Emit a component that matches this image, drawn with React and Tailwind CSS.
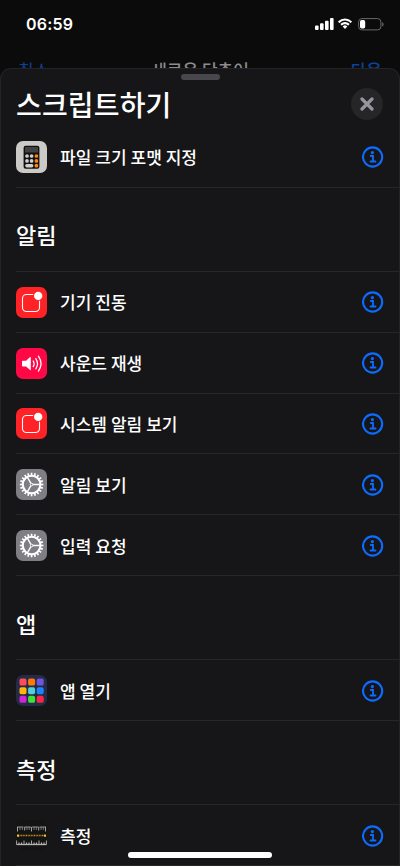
const LAUNCHER_COLORS = [
  '#ff4b5c', '#ff7a0a', '#6d55e0',
  '#ffb70f', '#4fd3d9', '#1a84ff',
  '#cf25d6', '#3fe335', '#ff2546',
];

const GEAR_TEETH = Array.from({ length: 20 }, (_, i) => i * 18);

function CalculatorIcon() {
  return (
    <svg viewBox="0 0 31 32" className="h-8 w-[31px]">
      <rect width="31" height="32" rx="7" fill="#cbcac6" />
      <rect x="7.6" y="4.7" width="15.8" height="23" rx="2" fill="#111112" />
      <rect x="9" y="6" width="13" height="5.6" rx="0.6" fill="#414143" />
      {[15, 19.9].map((y) => (
        <g key={y}>
          <circle cx="11" cy={y} r="1.85" fill="#d0cfd0" />
          <circle cx="15.6" cy={y} r="1.85" fill="#d0cfd0" />
          <circle cx="20.4" cy={y} r="1.85" fill="#ff8412" />
        </g>
      ))}
      <rect x="9.2" y="22.9" width="8.2" height="3.6" rx="1.7" fill="#d0cfd0" />
      <circle cx="20.4" cy="24.7" r="1.85" fill="#ff8412" />
    </svg>
  );
}

function NotificationIcon() {
  return (
    <svg viewBox="0 0 31 31" className="size-[31px]">
      <rect width="31" height="31" rx="7" fill="#ff2226" />
      <path
        d="M17.2 7.5h-6.7a4 4 0 0 0-4 4v9a4 4 0 0 0 4 4h9a4 4 0 0 0 4-4v-6.8"
        fill="none"
        stroke="#fff"
        strokeWidth="1.1"
      />
      <circle cx="22.2" cy="8.9" r="4.2" fill="#fff" />
    </svg>
  );
}

function SoundIcon() {
  return (
    <svg viewBox="0 0 31 31" className="size-[31px]">
      <rect width="31" height="31" rx="7" fill="#ff0845" />
      <path
        d="M6.9 12.7h3.2l4-3.6q.7-.5.7.4v12.2q0 .9-.7.4l-4-3.6H6.9q-.9 0-.9-.9v-4q0-.9.9-.9Z"
        fill="#fff"
      />
      <g fill="none" stroke="#fff" strokeWidth="1.25" strokeLinecap="round">
        <path d="M17.200 13q1.900 2.800 0 5.600" />
        <path d="M19.800 10.600q3.400 5.100 0 10.200" />
        <path d="M22.400 8.200q5.200 7.500 0 15" />
      </g>
    </svg>
  );
}

function GearIcon() {
  return (
    <svg viewBox="0 0 31 31" className="size-[31px]">
      <rect width="31" height="31" rx="7" fill="#7e7e83" />
      <g transform="translate(15.6 15.5)" stroke="#fff" fill="none">
        {GEAR_TEETH.map((angle) => (
          <path key={angle} d="M0-9.2V-11.8" strokeWidth="1.7" transform={`rotate(${angle})`} />
        ))}
        <circle r="8.8" strokeWidth="2.1" />
        <path d="M1.2 0H8.6M-.7-1.2-4.4-7.6M-.7 1.2-4.4 7.6" strokeWidth="1.4" />
        <circle r="1.3" strokeWidth="1" />
      </g>
    </svg>
  );
}

function LauncherIcon() {
  return (
    <svg viewBox="0 0 31 31" className="size-[31px]">
      <rect width="31" height="31" rx="7" fill="#262b45" />
      {LAUNCHER_COLORS.map((color, i) => (
        <rect
          key={color}
          x={3.5 + (i % 3) * 8.6}
          y={3.6 + Math.floor(i / 3) * 8.6}
          width="7"
          height="7"
          rx="1.9"
          fill={color}
        />
      ))}
    </svg>
  );
}

function MeasureIcon() {
  return (
    <svg viewBox="0 0 31 31" className="size-[31px]">
      <rect width="31" height="31" rx="7" fill="#141414" />
      <g stroke="#b4b4b4" strokeWidth="0.9" fill="none">
        <path d="M1 7H30" strokeWidth="0.8" strokeDasharray="6.5 1" />
        <path d="M1.5 7v4.500M8.700 7v3.500M15.500 7v4.500M22.700 7v3.500M29.500 7v4.500" />
        <path d="M4 7v3M6.300 7v3M11 7v3M13.200 7v3M18 7v3M20.300 7v3M25 7v3M27.300 7v3" strokeWidth="0.6" />
        <path d="M.5 24.500H30.500" strokeWidth="1.300" />
        <path d="M.6 20.500v4M8 20.500v4M15.500 20.500v4M23 20.500v4M30.400 20.500v4" />
        <path d="M3 22.500v2M5.500 22.500v2M10.500 22.500v2M13 22.500v2M18 22.500v2M20.500 22.500v2M25.500 22.500v2M28 22.500v2" strokeWidth="1.200" />
      </g>
      <path d="M2 15.600H29" stroke="#c39420" strokeWidth="1.500" strokeDasharray="1 .6" />
      <rect x="1" y="14.500" width="2" height="2.200" rx=".5" fill="#ffc21c" />
      <rect x="28" y="14.500" width="2" height="2.200" rx=".5" fill="#ffc21c" />
    </svg>
  );
}

function InfoIcon() {
  return (
    <svg viewBox="0 0 22 22" className="size-[22px]" fill="none" stroke="#0d6bff">
      <circle cx="10.6" cy="11" r="9.6" strokeWidth="2.1" />
      <circle cx="10.4" cy="6.6" r="1.6" fill="#0d6bff" stroke="none" />
      <path d="M8.800 10h2.200v5.500M8.500 15.500h5" strokeWidth="1.800" strokeLinecap="round" />
    </svg>
  );
}

const SECTIONS = [
  {
    items: [{ name: '파일 크기 포맷 지정', Icon: CalculatorIcon }],
  },
  {
    title: '알림',
    items: [
      { name: '기기 진동', Icon: NotificationIcon },
      { name: '사운드 재생', Icon: SoundIcon },
      { name: '시스템 알림 보기', Icon: NotificationIcon },
      { name: '알림 보기', Icon: GearIcon },
      { name: '입력 요청', Icon: GearIcon },
    ],
  },
  {
    title: '앱',
    items: [{ name: '앱 열기', Icon: LauncherIcon }],
  },
  {
    title: '측정',
    items: [{ name: '측정', Icon: MeasureIcon }],
  },
];

function StatusBar() {
  return (
    <div className="flex h-12 items-center justify-between pr-4 pl-[26px]">
      <span className="font-['Inter'] text-[16px] font-semibold tracking-[0.2px] text-white">06:59</span>
      <div className="flex items-center">
        <svg viewBox="0 0 19 12" className="h-3 w-[19px]" fill="#fff">
          <rect x="0" y="7.500" width="3.600" height="4.500" rx="1" />
          <rect x="5" y="5.200" width="3.600" height="6.800" rx="1" />
          <rect x="10" y="2.700" width="3.600" height="9.300" rx="1" />
          <rect x="15" y="0" width="3.600" height="12" rx="1" />
        </svg>
        <svg viewBox="0 0 17 12" className="ml-[3px] h-3 w-4" fill="#fff" preserveAspectRatio="none">
          <path d="M8.500 2.600c2.200 0 4.200.9 5.700 2.300.1.1.3.1.4 0l1.100-1.100c.2-.1.2-.4 0-.5a10.400 10.400 0 0 0-14.400 0c-.2.1-.2.4 0 .5l1.100 1.100c.1.1.3.1.4 0A8.300 8.300 0 0 1 8.500 2.600Z" />
          <path d="M8.500 6.200c1.200 0 2.300.4 3.200 1.200.1.1.3.1.4 0l1.100-1.100c.2-.2.2-.4 0-.5a6.900 6.900 0 0 0-9.400 0c-.2.1-.2.3 0 .5l1.100 1.100c.1.1.3.1.4 0 .9-.8 2-1.200 3.200-1.200Z" />
          <path d="M10.700 8.700c.2-.1.2-.4 0-.5a3.500 3.500 0 0 0-4.400 0c-.2.1-.2.4 0 .5l1.900 2c.2.1.4.1.6 0Z" />
        </svg>
        <svg viewBox="0 0 26 13" className="ml-[5px] h-[13px] w-[26px]">
          <rect x=".6" y=".6" width="22.300" height="11.300" rx="3.300" fill="none" stroke="#68686a" strokeWidth="1" />
          <rect x="2" y="2" width="5.200" height="8.500" rx="1.700" fill="#fff" />
          <path d="M24.200 4.300v4.200c.8-.4 1.400-1.200 1.400-2.100s-.6-1.700-1.400-2.100Z" fill="#68686a" />
        </svg>
      </div>
    </div>
  );
}

function ActionRow({ name, Icon }) {
  return (
    <div className="ml-4 flex h-[60.8px] items-center border-b border-[#272729] pt-px pr-4">
      <Icon />
      <span className="ml-[13px] flex-1 text-[17px] leading-6 font-medium tracking-[0.04px]">{name}</span>
      <InfoIcon />
    </div>
  );
}

export default function App() {
  return (
    <div className="relative h-[866px] w-[400px] overflow-hidden bg-[#0b0b0b] font-['Noto_Sans_CJK_KR',sans-serif] text-white">
      <StatusBar />
      <div className="flex h-5 justify-between overflow-hidden px-[18px] pt-[10px] text-[17px] leading-6">
        <span className="text-[#0b429a]">취소</span>
        <span className="font-medium text-[#8c8c8d]">새로운 단축어</span>
        <span className="font-medium text-[#0b429a]">다음</span>
      </div>

      {/* Action picker sheet */}
      <div className="h-[798px] overflow-hidden rounded-t-[11px] border-x border-t border-[#242426] bg-[#161618]">
        <div className="mx-auto mt-[5px] h-[6px] w-[39px] rounded-full bg-[#48484c]" />
        <div className="flex h-[47px] items-center justify-between pr-4 pl-[15px]">
          <h1 className="text-[28px] leading-[40px] font-medium tracking-[0.15px]">스크립트하기</h1>
          <button className="flex size-8 items-center justify-center rounded-full bg-[#262629]">
            <svg viewBox="0 0 14 14" className="size-[14px]" stroke="#95959e" strokeWidth="3.200" strokeLinecap="round">
              <path d="m2 2 10 10M12 2 2 12" />
            </svg>
          </button>
        </div>
        <div className="-mx-px">
          {SECTIONS.map((section, i) => (
            <section key={i}>
              {section.title && (
                <h2 className="ml-4 flex h-[84.2px] items-center border-b border-[#272729] pt-[10px] text-[22px] leading-8 font-medium">
                  {section.title}
                </h2>
              )}
              {section.items.map((item) => (
                <ActionRow key={item.name} {...item} />
              ))}
            </section>
          ))}
        </div>
      </div>

      {/* Home indicator */}
      <div className="absolute bottom-[8px] left-[128px] h-[6px] w-[144px] rounded-full bg-white" />
    </div>
  );
}
